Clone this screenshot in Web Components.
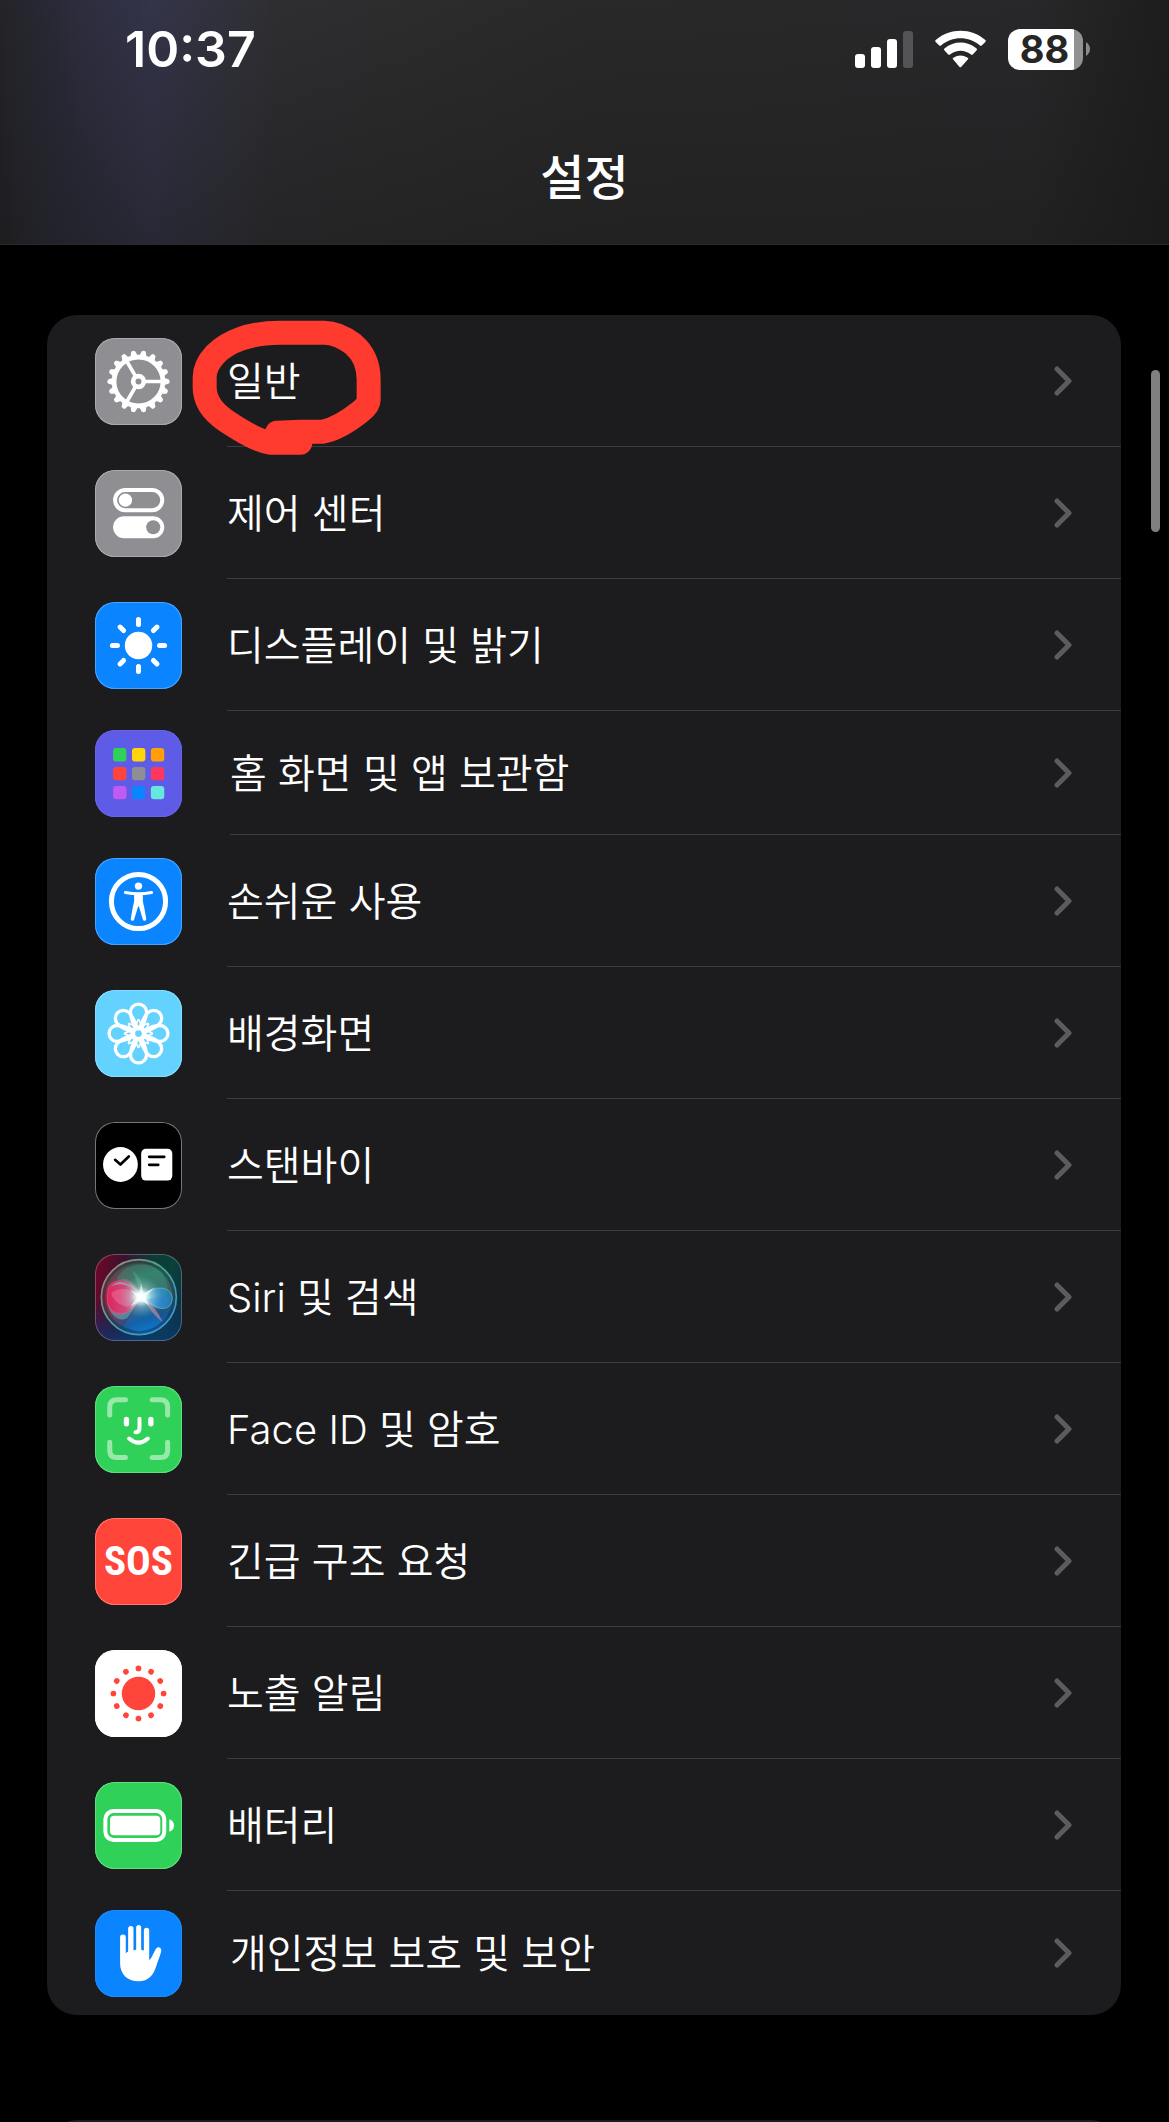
<!DOCTYPE html>
<html lang="ko">
<head>
<meta charset="utf-8">
<meta name="viewport" content="width=device-width, initial-scale=1">
<title>설정</title>
<style>
  body {
    margin: 0;
    background: #000;
    color: #fff;
    font-family: Inter, "Noto Sans CJK KR", sans-serif;
  }
</style>
</head>
<body>
<settings-screen>
  <status-bar slot="top" time="10:37" battery="88"></status-bar>
  <nav-title slot="top">설정</nav-title>

  <settings-group>
    <settings-row icon="general">일반<ink-ring slot="overlay"></ink-ring></settings-row>
    <settings-row icon="control">제어 센터</settings-row>
    <settings-row icon="display">디스플레이 및 밝기</settings-row>
    <settings-row icon="home" compact>홈 화면 및 앱 보관함</settings-row>
    <settings-row icon="accessibility">손쉬운 사용</settings-row>
    <settings-row icon="wallpaper">배경화면</settings-row>
    <settings-row icon="standby">스탠바이</settings-row>
    <settings-row icon="siri">Siri 및 검색</settings-row>
    <settings-row icon="faceid">Face ID 및 암호</settings-row>
    <settings-row icon="sos">긴급 구조 요청</settings-row>
    <settings-row icon="exposure">노출 알림</settings-row>
    <settings-row icon="battery">배터리</settings-row>
    <settings-row icon="privacy" compact last>개인정보 보호 및 보안</settings-row>
  </settings-group>
  <settings-group class="next"></settings-group>
</settings-screen>

<script>
// Repeats an SVG fragment around the icon centre
const spin = (count, fragment, start = 0) =>
  Array.from({ length: count }, (_, i) =>
    `<g transform="rotate(${start + i * 360 / count} 130 130)">${fragment}</g>`).join('');

const homeColors = ['#30d158', '#ffd60a', '#ff9f0a', '#ff453a', '#8e8e93', '#ff375f', '#bf5af2', '#0a84ff', '#66e8e0'];

// Every icon is drawn on a 260 x 260 grid
const ICONS = {
  general: {
    bg: '#8e8e93',
    edge: '#a9a9ae',
    art: `
      <g fill="none" stroke="#fff">
        <circle cx="130" cy="130" r="73" stroke-width="14"/>
        <circle cx="130" cy="130" r="16" stroke-width="14"/>
        ${spin(3, '<path d="M150 130H200" stroke-width="11"/>')}
      </g>
      ${spin(18, '<path d="M206 119L221 124Q225 130 221 136L206 141Z" fill="#fff"/>')}`
  },
  control: {
    bg: '#8e8e93',
    edge: '#a9a9ae',
    art: `
      <rect x="60" y="60" width="141" height="60" rx="30" fill="none" stroke="#fff" stroke-width="12"/>
      <circle cx="91" cy="90" r="20" fill="#fff"/>
      <rect x="54" y="138" width="153" height="66" rx="33" fill="#fff"/>
      <circle cx="174" cy="171" r="21" fill="#8e8e93"/>`
  },
  display: {
    bg: '#0a84ff',
    edge: '#4aa3ff',
    art: `
      <circle cx="130" cy="130" r="41" fill="#fff"/>
      <g stroke="#fff" stroke-width="15" stroke-linecap="round">${spin(8, '<path d="M193 130H208"/>')}</g>`
  },
  home: {
    bg: '#5e5ce6',
    edge: '#6563e8',
    art: homeColors.map((c, i) =>
      `<rect x="${54 + (i % 3) * 56.5}" y="${54 + Math.floor(i / 3) * 56.5}" width="40" height="40" rx="9" fill="${c}"/>`).join('')
  },
  accessibility: {
    bg: '#0a84ff',
    edge: '#4aa3ff',
    art: `
      <circle cx="130" cy="130" r="81" fill="none" stroke="#fff" stroke-width="15"/>
      <circle cx="130" cy="84" r="11" fill="#fff"/>
      <path d="M91 103Q110 107 130 107T169 103" fill="none" stroke="#fff" stroke-width="9" stroke-linecap="round"/>
      <path d="M117 106H143V128Q144 136 147 147L153 181A5 5 0 0 1 143 184L132 147Q130 141 128 147L117 184A5 5 0 0 1 107 181L113 147Q116 136 117 128Z" fill="#fff"/>`
  },
  wallpaper: {
    bg: '#64d2ff',
    edge: '#86dcff',
    art: `<g fill="none" stroke="#fff" stroke-width="10" stroke-linejoin="round">
      <circle cx="130" cy="130" r="15"/>
      ${spin(8, '<path d="M122 118C116 104 106 86 106 66A24 24 0 0 1 154 66C154 86 144 104 138 118"/>')}
      ${spin(8, '<path d="M130 87L146 120" stroke-width="5"/><path d="M130 87L114 120" stroke-width="5"/>')}
    </g>`
  },
  standby: {
    bg: '#000',
    edge: '#77777b',
    art: `
      <circle cx="76" cy="127" r="52" fill="#fff"/>
      <rect x="138" y="80" width="93" height="95" rx="14" fill="#fff"/>
      <g fill="none" stroke="#000" stroke-width="8" stroke-linecap="round" stroke-linejoin="round">
        <path d="M60 113L76 127L101 103"/>
        <path d="M162 104H207M162 128H189"/>
      </g>`
  },
  siri: {
    bg: 'linear-gradient(100deg, #6c0828 4%, #391230 30%, #0c3b38 58%, #0b403b 78%, #0d2f46)',
    edge: 'transparent',
    art: `
      <defs>
        <linearGradient id="floor" x1="0" y1="0" x2="0" y2="1">
          <stop offset=".5" stop-color="#0a2c60" stop-opacity="0"/>
          <stop offset="1" stop-color="#0c3978" stop-opacity=".75"/>
        </linearGradient>
        <linearGradient id="orb" x1=".2" y1="0" x2=".5" y2="1">
          <stop offset="0" stop-color="#4d3a40"/>
          <stop offset=".3" stop-color="#2b7664"/>
          <stop offset=".6" stop-color="#3b5c66"/>
          <stop offset=".85" stop-color="#16568f"/>
          <stop offset="1" stop-color="#0f74cf"/>
        </linearGradient>
        <linearGradient id="rim" x1="0" y1="0" x2="1" y2="1">
          <stop offset="0" stop-color="#c3757b"/>
          <stop offset=".4" stop-color="#4fa58a"/>
          <stop offset=".7" stop-color="#399cc1"/>
          <stop offset="1" stop-color="#4d8fe9"/>
        </linearGradient>
        <radialGradient id="blush" cx=".08" cy=".5" r=".5">
          <stop offset="0" stop-color="#b3123f" stop-opacity=".85"/>
          <stop offset="1" stop-color="#b3123f" stop-opacity="0"/>
        </radialGradient>
        <linearGradient id="pink" x1="0" x2="1">
          <stop offset="0" stop-color="#e8245f"/>
          <stop offset=".6" stop-color="#d84f86"/>
          <stop offset="1" stop-color="#e9ffff"/>
        </linearGradient>
        <linearGradient id="blue" x1="0" x2="1">
          <stop offset="0" stop-color="#c7ffff"/>
          <stop offset=".5" stop-color="#3a9bd0"/>
          <stop offset="1" stop-color="#1f7fae"/>
        </linearGradient>
        <radialGradient id="glow">
          <stop offset="0" stop-color="#fff"/>
          <stop offset=".22" stop-color="#eaffff" stop-opacity=".95"/>
          <stop offset=".5" stop-color="#b6e6e0" stop-opacity=".4"/>
          <stop offset="1" stop-color="#8cc4c0" stop-opacity="0"/>
        </radialGradient>
      </defs>
      <rect width="260" height="260" rx="60" fill="url(#floor)"/>
      <circle cx="131" cy="129" r="112" fill="url(#orb)"/>
      <circle cx="131" cy="129" r="112" fill="url(#blush)" stroke="url(#rim)" stroke-width="5"/>
      <circle cx="131" cy="129" r="105" fill="none" stroke="#14292c" stroke-opacity=".4" stroke-width="8"/>
      <path d="M64 76C86 20 176 16 205 66C226 100 218 127 190 137L136 126Z" fill="#4aa58c" fill-opacity=".3"/>
      <path d="M37 148C70 196 117 174 138 129L98 190C75 207 47 187 37 148Z" fill="#5cc4d3" fill-opacity=".5"/>
      <path d="M86 216Q112 172 140 131Q172 180 200 196Q180 229 130 232Z" fill="#0f7fd6" fill-opacity=".35"/>
      <path d="M38 112C42 74 88 72 113 93L144 127C122 152 98 190 60 176C38 166 34 136 38 112Z" fill="url(#pink)" fill-opacity=".9" stroke="#f06a92" stroke-opacity=".7" stroke-width="2"/>
      <path d="M49 116Q85 88 140 127Q110 131 100 158Q70 156 51 127Z" fill="#ff9db8" fill-opacity=".3"/>
      <path d="M48 97Q82 60 138 124Q92 76 48 97Z" fill="#8fd0cc" fill-opacity=".55"/>
      <path d="M138 129C164 94 230 90 231 133C228 172 186 175 138 129Z" fill="url(#blue)" fill-opacity=".85" stroke="#55c2e6" stroke-width="2"/>
      <path d="M148 133Q190 134 223 128Q206 160 178 152Z" fill="#2f7fe0" fill-opacity=".55"/>
      <path d="M144 132Q184 158 202 204Q167 176 144 132Z" fill="#d890aa" fill-opacity=".6"/>
      <path d="M112 50Q150 74 141 130Q116 92 75 74Q116 70 141 125Z" fill="#a6d0c4" fill-opacity=".2"/>
      <circle cx="138" cy="128" r="62" fill="url(#glow)"/>
      <path d="M138 88L144 119L178 100L150 128L162 154L138 139L106 156L126 130L106 107L132 120Z" fill="#fff" fill-opacity=".65"/>
      <rect x="1" y="1" width="258" height="258" rx="59" fill="none" stroke="#fff" stroke-opacity=".25" stroke-width="4"/>`
  },
  faceid: {
    bg: '#30d158',
    edge: '#62dd80',
    art: `
      <g fill="none" stroke-linecap="round">
        <path d="M44 87V63Q44 41 66 41H91M171 41H195Q217 41 217 63V87M217 168V192Q217 214 195 214H171M91 214H66Q44 214 44 192V168" stroke="#98e8ab" stroke-width="15"/>
        <path d="M94 100V113M167 100V113" stroke="#fff" stroke-width="16"/>
        <path d="M133 98V126Q133 138 121 138" stroke="#fff" stroke-width="12"/>
        <path d="M102 157Q130 182 158 157" stroke="#fff" stroke-width="12"/>
      </g>`
  },
  sos: {
    bg: '#ff453a',
    edge: '#ff766e',
    text: 'SOS'
  },
  exposure: {
    bg: '#fff',
    edge: '#fff',
    art: `<g fill="#ff453a"><circle cx="130" cy="130" r="50"/>${spin(12, '<circle cx="205" cy="130" r="8.5"/>')}</g>`
  },
  battery: {
    bg: '#30d158',
    edge: '#62dd80',
    art: `
      <rect x="31" y="87" width="176" height="86" rx="24" fill="none" stroke="#fff" stroke-width="12"/>
      <rect x="45" y="101" width="150" height="58" rx="12" fill="#fff"/>
      <path d="M222 111Q236 116 236 130T222 149Z" fill="#fff"/>`
  },
  privacy: {
    bg: '#0a84ff',
    edge: '#1a8cff',
    art: `
      <path d="M75 82a8 8 0 0 1 17 0V129Q95 126 99 124V56a8 8 0 0 1 16 0V121Q119 119 123 119V50a8 8 0 0 1 15 0V119L146 121V61a8 8 0 0 1 16 0V150Q168 145 172 135L182 116C187 107 199 111 198 121C197 131 189 150 184 165C175 195 160 213 130 213C97 213 75 192 75 160Z" fill="#fff"/>`
  }
};

class AppIcon extends HTMLElement {
  static get observedAttributes() {
    return ['name'];
  }
  constructor() {
    super();
    this.attachShadow({ mode: 'open' });
  }
  attributeChangedCallback() { this.render(); }
  render() {
    const icon = ICONS[this.getAttribute('name')];
    if (!icon) return;
    this.shadowRoot.innerHTML = `
      <style>
        :host {
          display: flex;
          align-items: center;
          justify-content: center;
          box-sizing: border-box;
          width: 87px;
          height: 87px;
          border-radius: 20px;
          overflow: hidden;
          background: ${icon.bg};
          box-shadow: inset 0 0 0 1px ${icon.edge};
        }
        svg { display: block; width: 100%; height: 100%; }
        .text {
          font: 700 41px/48px "Roboto Condensed", "Liberation Sans Narrow", "Open Sans Condensed", Roboto, sans-serif;
        }
      </style>
      ${icon.text
        ? `<span class="text">${icon.text}</span>`
        : `<svg viewBox="0 0 260 260" aria-hidden="true">${icon.art}</svg>`}
    `;
  }
}
customElements.define('app-icon', AppIcon);

class InkRing extends HTMLElement {
  constructor() {
    super();
    this.attachShadow({ mode: 'open' }).innerHTML = `
      <style>
        :host {
          position: absolute;
          left: 143px;
          top: 2px;
          z-index: 1;
          pointer-events: none;
        }
        svg { display: block; width: 197px; height: 143px; }
      </style>
      <svg viewBox="450 51 591 429" fill="none" stroke="#ff3b30" stroke-width="72" stroke-linecap="round" stroke-linejoin="round" aria-hidden="true">
        <path d="M711 398L780 395H848C890 387 932 358 962 334Q986 315 986 300V240C986 195 972 160 940 133Q895 98 852 98H720C630 98 562 125 526 163Q494 197 494 232V262C494 305 518 335 556 361C602 392 652 423 690 428H781"/>
      </svg>
    `;
  }
}
customElements.define('ink-ring', InkRing);

class SettingsRow extends HTMLElement {
  constructor() {
    super();
    this.attachShadow({ mode: 'open' });
  }
  connectedCallback() {
    this.shadowRoot.innerHTML = `
      <style>
        :host {
          --row-height: 132px;
          --row-gap: 45px;
          display: block;
          position: relative;
        }
        :host([compact]) {
          --row-height: 124px;
          --row-gap: 48px;
        }
        a {
          display: flex;
          gap: var(--row-gap);
          height: var(--row-height);
          padding-left: 48px;
          color: inherit;
          text-decoration: none;
        }
        app-icon { align-self: center; flex: none; }
        .body {
          display: flex;
          flex: 1;
          align-items: center;
          justify-content: space-between;
          box-sizing: border-box;
          padding-right: 49px;
          border-bottom: 1px solid #3d3d41;
        }
        :host([last]) .body { border-bottom: 0; }
        .label { padding-top: 2px; font-size: 40px; font-weight: 350; line-height: 56px; }
        svg { display: block; width: 19px; height: 32px; flex: none; }
      </style>
      <a href="#${this.getAttribute('icon')}">
        <app-icon name="${this.getAttribute('icon')}"></app-icon>
        <span class="body">
          <span class="label"><slot></slot></span>
          <svg viewBox="0 0 19 32" fill="none" stroke="#5b5b60" stroke-width="5" stroke-linecap="round" stroke-linejoin="round" aria-hidden="true">
            <path d="M4 4L16 16L4 28"/>
          </svg>
        </span>
      </a>
      <slot name="overlay"></slot>
    `;
  }
}
customElements.define('settings-row', SettingsRow);

class SettingsGroup extends HTMLElement {
  constructor() {
    super();
    this.attachShadow({ mode: 'open' }).innerHTML = `
      <style>
        :host {
          display: block;
          min-height: 132px;
          border-radius: 30px;
          background: #1c1c1e;
        }
      </style>
      <slot></slot>
    `;
  }
}
customElements.define('settings-group', SettingsGroup);

class StatusBar extends HTMLElement {
  constructor() {
    super();
    this.attachShadow({ mode: 'open' });
  }
  connectedCallback() {
    this.shadowRoot.innerHTML = `
      <style>
        :host {
          display: flex;
          align-items: center;
          justify-content: space-between;
          height: 98px;
          padding: 0 79px 0 125px;
        }
        time { font-size: 50px; font-weight: 600; line-height: 60px; }
        .status { display: flex; align-items: center; gap: 22px; }
        svg { display: block; }
        .battery { display: flex; align-items: center; gap: 3px; }
        .level {
          display: flex;
          align-items: center;
          justify-content: center;
          box-sizing: border-box;
          width: 75px;
          height: 41px;
          padding-right: 2px;
          border-radius: 12px;
          background: linear-gradient(90deg, #fff 88%, #929293 88%);
          color: #262627;
          font-size: 38px;
          font-weight: 700;
          line-height: 41px;
        }
      </style>
      <time>${this.getAttribute('time')}</time>
      <span class="status">
        <svg width="58" height="38" viewBox="0 0 58 38" fill="#fff" aria-hidden="true">
          <rect y="24" width="10" height="14" rx="3"/>
          <rect x="16" y="17" width="10" height="21" rx="3"/>
          <rect x="32" y="9" width="10" height="29" rx="3"/>
          <rect x="48" y="1" width="10" height="37" rx="3" fill="#545456"/>
        </svg>
        <svg width="51" height="38" viewBox="0 0 153 114" fill="#fff" aria-hidden="true">
          <path d="M2 36Q-1 32 3 29C45-7 109-7 150 29Q154 32 151 36L141 46Q138 49 134 46C101 18 52 18 19 46Q15 49 12 46Z"/>
          <path d="M28 61Q25 58 29 55C57 32 96 32 124 55Q128 58 125 61L114 73Q111 76 107 73C89 59 64 59 46 73Q42 76 39 73Z"/>
          <path d="M54 88Q51 85 55 83Q76 70 98 83Q102 85 99 88L79 110Q76 113 73 110Z"/>
        </svg>
        <span class="battery">
          <span class="level">${this.getAttribute('battery')}</span>
          <svg width="4" height="14" viewBox="0 0 4 14" fill="#8b8b8c" aria-hidden="true"><path d="M0 0Q4 3 4 7T0 14Z"/></svg>
        </span>
      </span>
    `;
  }
}
customElements.define('status-bar', StatusBar);

class NavTitle extends HTMLElement {
  constructor() {
    super();
    this.attachShadow({ mode: 'open' }).innerHTML = `
      <style>
        :host { display: block; padding: 45px 0 31px; text-align: center; }
        h1 { margin: 0; font-size: 48px; font-weight: 500; line-height: 70px; }
      </style>
      <h1><slot></slot></h1>
    `;
  }
}
customElements.define('nav-title', NavTitle);

class SettingsScreen extends HTMLElement {
  constructor() {
    super();
    this.attachShadow({ mode: 'open' }).innerHTML = `
      <style>
        :host {
          display: block;
          position: relative;
          height: 100vh;
          overflow: hidden;
        }
        header {
          border-bottom: 1px solid #29292b;
          background:
            linear-gradient(180deg, transparent, rgba(22, 22, 22, .4)),
            linear-gradient(90deg, #232328 0, #2d2d3e 7%, #34344a 13%, #323240 17%, #2e2e31 24%, #2c2c2d 35%, #29292a 50%, #28282a 88%, #1d1d1d 100%);
        }
        main {
          display: flex;
          flex-direction: column;
          gap: 105px;
          padding: 70px 48px 0 47px;
        }
        .scroll {
          position: absolute;
          top: 370px;
          right: 9px;
          width: 9px;
          height: 162px;
          border-radius: 5px;
          background: #808080;
        }
      </style>
      <header><slot name="top"></slot></header>
      <main><slot></slot></main>
      <div class="scroll"></div>
    `;
  }
}
customElements.define('settings-screen', SettingsScreen);
</script>
</body>
</html>
